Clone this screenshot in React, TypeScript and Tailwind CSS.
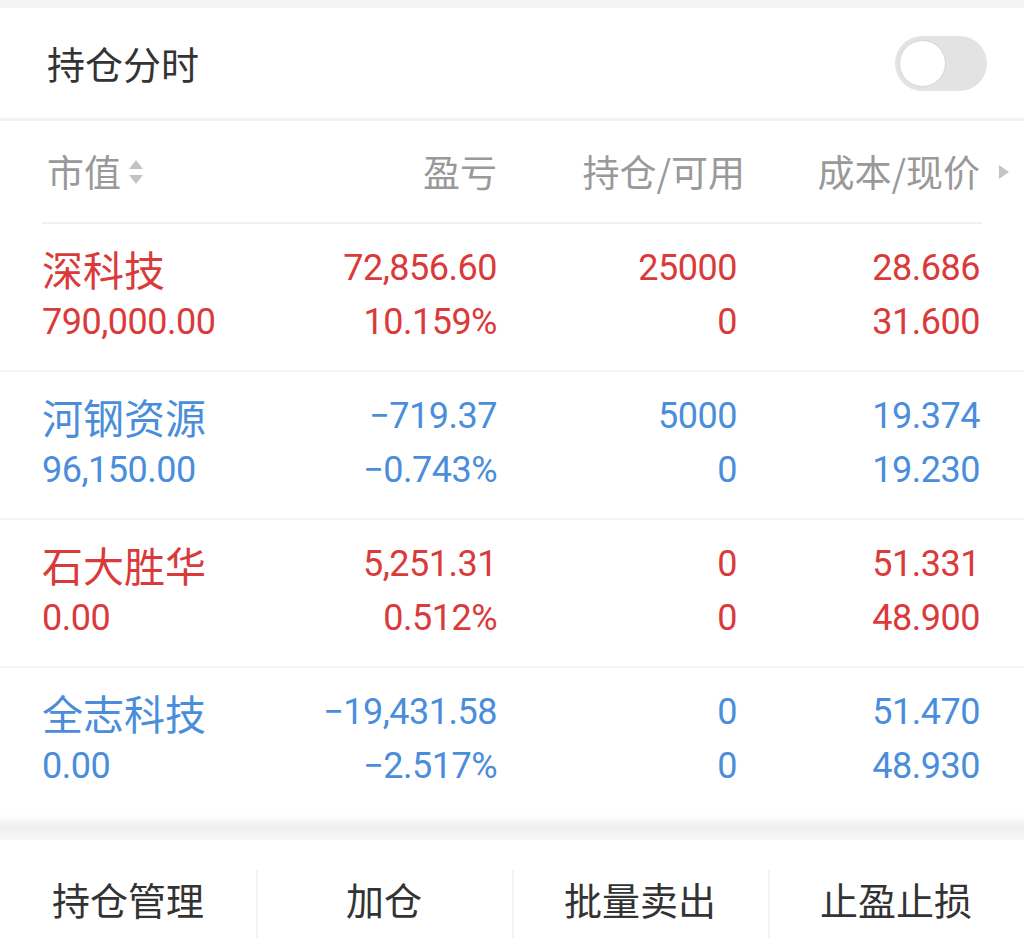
import React from 'react';

type Row = {
  name: string;
  value: string;
  pnl: string;
  pct: string;
  hold: string;
  avail: string;
  cost: string;
  price: string;
  up: boolean;
};

const rows: Row[] = [
  { name: '深科技', value: '790,000.00', pnl: '72,856.60', pct: '10.159%', hold: '25000', avail: '0', cost: '28.686', price: '31.600', up: true },
  { name: '河钢资源', value: '96,150.00', pnl: '−719.37', pct: '−0.743%', hold: '5000', avail: '0', cost: '19.374', price: '19.230', up: false },
  { name: '石大胜华', value: '0.00', pnl: '5,251.31', pct: '0.512%', hold: '0', avail: '0', cost: '51.331', price: '48.900', up: true },
  { name: '全志科技', value: '0.00', pnl: '−19,431.58', pct: '−2.517%', hold: '0', avail: '0', cost: '51.470', price: '48.930', up: false },
];

const cjk = "font-['Noto_Sans_CJK_SC',sans-serif]";
const num = "font-['Roboto','Liberation_Sans',sans-serif] text-[36px] tracking-[-0.5px]";
const cols = 'grid grid-cols-[255px_200px_240px_243px]';

function SortIcon() {
  return (
    <svg width="20" height="28" viewBox="0 0 20 28" className="ml-[5px]">
      <path d="M10 2 L17 11 L3 11 Z" fill="#c4c4c4" />
      <path d="M10 26 L17 17 L3 17 Z" fill="#c4c4c4" />
    </svg>
  );
}

export default function App() {
  return (
    <div className="w-[1024px] h-[942px] overflow-hidden bg-white">
      <div className="h-[8px] bg-[#f3f3f3]" />

      {/* title bar */}
      <div className="h-[110px] flex items-center justify-between pl-[47px] pr-[37px]">
        <span className={`${cjk} text-[38px] text-[#333333] leading-none`}>持仓分时</span>
        <div className="w-[92px] h-[55px] rounded-full bg-[#e3e3e3] p-[4px] flex items-center">
          <div className="w-[47px] h-[47px] rounded-full bg-white border border-[#d6d6d6]" />
        </div>
      </div>
      <div className="h-[3px] bg-[#f2f2f2]" />

      {/* header */}
      <div className="relative px-[42px]">
        <div className={`${cols} h-[101px] items-center ${cjk} text-[37px] text-[#999999] leading-none`}>
          <div className="flex items-center pl-[5px]">
            <span>市值</span>
            <SortIcon />
          </div>
          <div className="text-right">盈亏</div>
          <div className="text-right mr-[-8px]">持仓/可用</div>
          <div className="text-right">成本/现价</div>
        </div>
        <svg width="12" height="16" viewBox="0 0 12 16" className="absolute right-[14px] top-[43px]">
          <path d="M1 1 L11 8 L1 15 Z" fill="#c4c4c4" />
        </svg>
        <div className="h-[2px] bg-[#f0f0f0]" />
      </div>

      {/* rows */}
      {rows.map((r, i) => (
        <div key={r.name}>
          <div
            className={`${cols} px-[42px] pt-[17px] pb-[21px] leading-[54px] ${
              r.up ? 'text-[#da3a3a]' : 'text-[#4a8edb]'
            }`}
          >
            <div>
              <div className={`${cjk} text-[41px]`}>{r.name}</div>
              <div className={num}>{r.value}</div>
            </div>
            <div className={`${num} text-right`}>
              <div>{r.pnl}</div>
              <div>{r.pct}</div>
            </div>
            <div className={`${num} text-right`}>
              <div>{r.hold}</div>
              <div>{r.avail}</div>
            </div>
            <div className={`${num} text-right`}>
              <div>{r.cost}</div>
              <div>{r.price}</div>
            </div>
          </div>
          {i < rows.length - 1 && <div className="h-[2px] bg-[#f5f5f5]" />}
        </div>
      ))}

      {/* gap */}
      <div className="h-[26px] bg-gradient-to-b from-white via-[#efefef] to-[#f7f7f7]" />

      {/* bottom actions */}
      <div className={`grid grid-cols-4 h-[102px] pt-[16px] ${cjk} text-[38px] text-[#333333] leading-none`}>
        {['持仓管理', '加仓', '批量卖出', '止盈止损'].map((t, i) => (
          <div key={t} className="relative flex items-center justify-center">
            {i > 0 && <div className="absolute left-0 top-[14px] bottom-[4px] w-[2px] bg-[#f3f3f3]" />}
            <span>{t}</span>
          </div>
        ))}
      </div>
    </div>
  );
}
